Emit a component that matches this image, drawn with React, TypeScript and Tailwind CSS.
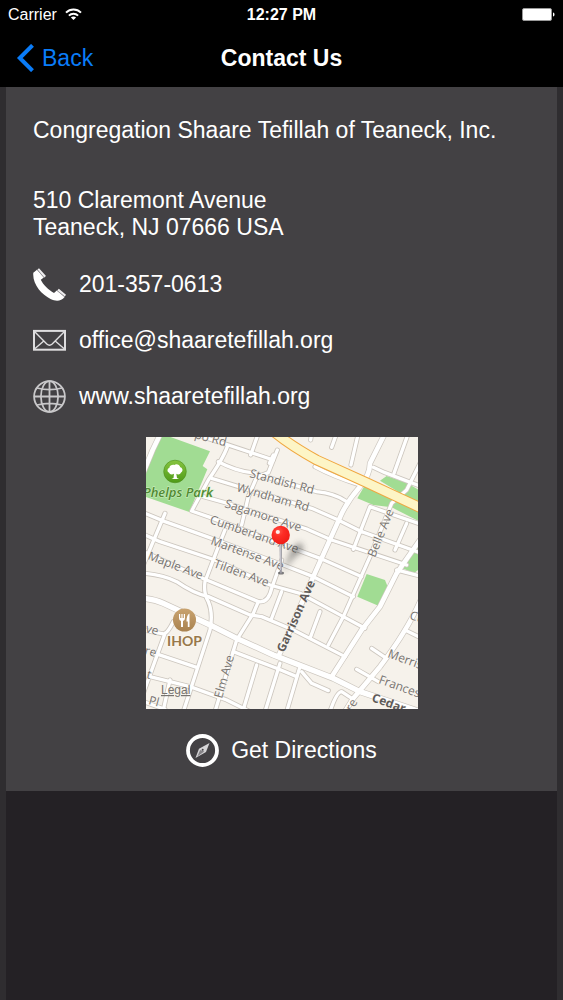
import type { ReactNode } from 'react';

interface StreetLabel {
  text: string;
  x: number;
  y: number;
  angle: number;
  bold?: boolean;
}

// Street lines are stored on a grid three times finer than the map itself
const SIDE_STREETS = [
  // north west
  'M140 5 L265 45 L400 90',
  'M355 10 L332 75',
  'M412 60 L385 128 L350 142 L325 200 L305 285',
  'M262 50 Q250 85 205 150 L155 243 L210 262 L540 385 L665 440',
  'M235 95 Q285 122 335 128 L530 185 Q585 190 620 215',
  'M215 145 L290 168 L515 235 L590 268 L665 305',
  'M190 200 L255 218 L500 297 L575 330 L800 405',
  'M15 250 L75 275 L215 325 L430 405 L520 440 L640 500',
  'M15 315 L60 335 L225 390 L390 465 L480 490 L610 560 L675 595',
  'M75 250 L10 405',
  'M255 300 L235 350 L195 455 Q190 490 205 515 Q220 550 210 600 L130 845',
  // south west
  'M10 365 L200 450 L355 515',
  'M15 430 Q70 435 110 455 Q160 490 205 500 L330 555 L365 560 L460 600 L615 680',
  'M100 575 Q85 605 75 610 L10 790',
  'M10 600 L70 612',
  'M45 670 L170 712',
  'M30 740 L150 770 L260 810 L330 845',
  'M90 750 L70 840',
  'M10 815 L75 838',
  'M425 390 L395 475 Q385 520 355 515 L340 550 L290 630 L225 845',
  'M280 665 L410 715 L470 740',
  'M350 705 L308 845',
  'M420 700 L375 845',
  'M425 485 L393 570',
  // south east
  'M540 545 L510 625',
  'M480 710 L440 845',
  'M485 725 L515 760 L565 782',
  'M570 845 Q590 785 605 785 L640 808',
  'M695 655 L735 682',
  'M650 718 L715 755',
  'M795 600 L840 622',
  // north east
  'M655 10 L633 105',
  'M590 10 L575 52',
  'M515 10 L512 30',
  'M400 75 L388 100',
  'M805 10 L762 130',
  'M700 112 L735 128 L840 168',
  'M840 100 L800 180 L755 220 L690 380 L610 560 L565 645',
  'M525 110 Q580 140 660 165',
  'M640 358 L690 230 L840 282',
  'M800 280 L765 360',
  'M665 305 L840 368',
  'M770 420 L840 438',
];

const MAIN_STREETS = [
  'M62 10 L38 60 L10 128',
  'M735 10 L690 100 Q690 135 660 170 Q620 215 600 262 L520 440 L415 680',
  'M840 330 L770 430 L720 530 L665 600 L575 740',
  'M840 515 Q800 605 720 710 L640 805 L615 845',
];

const AVENUE = 'M10 505 Q45 508 70 520 L210 585 L290 625 L400 675 L580 745 L660 785 L840 845';
const HIGHWAY = 'M390 -5 Q440 40 530 90 L680 158 L845 235';

const LABELS: StreetLabel[] = [
  { text: 'po Rd', x: 48, y: 1, angle: 15 },
  { text: 'Standish Rd', x: 103, y: 40, angle: 15 },
  { text: 'Wyndham Rd', x: 90, y: 54, angle: 16 },
  { text: 'Sagamore Ave', x: 78, y: 70, angle: 18 },
  { text: 'Cumberland Ave', x: 63, y: 86, angle: 19 },
  { text: 'Martense Ave', x: 64, y: 107, angle: 20 },
  { text: 'Tilden Ave', x: 67, y: 130, angle: 20 },
  { text: 'Maple Ave', x: 1, y: 122, angle: 21 },
  { text: 'Belle Ave', x: 229, y: 121, angle: -68 },
  { text: 'Elm Ave', x: 76, y: 262, angle: -74 },
  { text: 'Garrison Ave', x: 138, y: 216, angle: -66, bold: true },
  { text: 'Merrison', x: 241, y: 220, angle: 20 },
  { text: 'Frances', x: 232, y: 246, angle: 20 },
  { text: 'Cedar', x: 225, y: 264, angle: 20, bold: true },
  { text: 'Ct', x: 263, y: 182, angle: 15 },
  { text: 've', x: -1, y: 195, angle: 15 },
  { text: 're', x: -2, y: 217, angle: 15 },
  { text: 't', x: 0, y: 241, angle: 15 },
  { text: 'Pl', x: 2, y: 267, angle: 15 },
  { text: 're', x: 206, y: 275, angle: -60 },
];

function WifiIcon() {
  return (
    <svg viewBox="0 0 17 13" className="h-[13px] w-[17px]" fill="none" stroke="white" strokeWidth="2" aria-hidden="true">
      <path d="M1 4.6 C5.2 .4 11.8 .4 16 4.6" />
      <path d="M3.9 7.6 C6.5 5 10.5 5 13.1 7.6" />
      <path d="M8.5 12 L5.9 9.4 C7.4 8.1 9.6 8.1 11.1 9.4 Z" fill="white" stroke="none" />
    </svg>
  );
}

function BatteryIcon() {
  return (
    <svg viewBox="0 0 33 13" className="h-[13px] w-[33px]" aria-hidden="true">
      <rect x="0.5" y="0.5" width="29" height="12" rx="1.5" fill="white" stroke="#999" />
      <path d="M31 4.5 C33 5 33 8 31 8.5 Z" fill="white" />
    </svg>
  );
}

function PhoneIcon() {
  return (
    <svg viewBox="0 0 33 33" className="size-[33px] shrink-0" aria-hidden="true">
      <path
        d="M0.3 4.8 L4 1.8 L10.8 9.6 L7.8 11.8 C10 16.5 15.5 22.2 21 25 L23.8 22.6 L31.6 29 C28 33.4 23 33.6 17.5 31 C8.5 26.8 -0.8 16 0.3 4.8 Z"
        fill="white"
      />
      <path d="M4.4 1.6 L6 0.2 L13 8 L11.2 9.4 Z M24.2 22.4 L25.8 20.8 L33 26.8 L31.8 28.6 Z" fill="#eeedef" />
      <path d="M4.2 1.7 L11 9.5 M24 22.5 L31.7 28.8" stroke="#a3a1a5" strokeWidth="0.7" />
    </svg>
  );
}

function MailIcon() {
  return (
    <svg viewBox="0 0 33 33" className="size-[33px] shrink-0" fill="none" stroke="#dedddf" aria-hidden="true">
      <rect x="1" y="6.9" width="31" height="18.8" strokeWidth="2" />
      <path d="M1.5 7.5 L13.8 20 Q16.5 22.4 19.2 20 L31.5 7.5 M1.5 25 L10.8 17 M31.5 25 L22.2 17" strokeWidth="1.4" />
    </svg>
  );
}

function GlobeIcon() {
  return (
    <svg viewBox="0 0 33 33" className="size-[33px] shrink-0" fill="none" stroke="#c9c8ca" strokeWidth="1.8" aria-hidden="true">
      <circle cx="16.5" cy="16.5" r="15.4" />
      <ellipse cx="16.5" cy="16.5" rx="8.6" ry="15.4" />
      <path d="M16.5 1 V32 M1 16.5 H32 M4 8 Q16.5 11.2 29 8 M4 25 Q16.5 21.8 29 25" />
    </svg>
  );
}

function CompassIcon() {
  return (
    <svg viewBox="0 0 33 33" className="size-[33px] shrink-0" aria-hidden="true">
      <circle cx="16.5" cy="16.5" r="14.5" fill="none" stroke="white" strokeWidth="3.8" />
      <path d="M23.5 9 L20 18 L9.5 24 L13 14.8 Z" fill="#d5d4d6" />
      <path d="M18.3 17.6 L11.3 22.4 L14.2 16 Z" fill="#858387" />
      <circle cx="16.7" cy="15.8" r="1" fill="#434144" />
    </svg>
  );
}

function LocationMap() {
  return (
    <svg viewBox="0 0 272 272" className="h-[272px] w-[272px] overflow-hidden" role="img" aria-label="Map of Teaneck">
      <defs>
        <filter id="soft" x="-50%" y="-50%" width="200%" height="200%">
          <feGaussianBlur stdDeviation="3" />
        </filter>
        <radialGradient id="pin" cx="38%" cy="30%" r="70%">
          <stop offset="0" stopColor="#ff5548" />
          <stop offset="0.4" stopColor="#fd2d26" />
          <stop offset="1" stopColor="#f01d17" />
        </radialGradient>
        <linearGradient id="tree" x1="0" y1="0" x2="0" y2="1">
          <stop offset="0" stopColor="#86c440" />
          <stop offset="1" stopColor="#4e9a17" />
        </linearGradient>
        <linearGradient id="food" x1="0" y1="0" x2="0" y2="1">
          <stop offset="0" stopColor="#c9a36f" />
          <stop offset="1" stopColor="#a98250" />
        </linearGradient>
      </defs>
      <rect width="272" height="272" fill="#f6f2eb" />

      <g transform="translate(-6 -7) scale(0.3333)">
        {/* Parks */}
        <g fill="#a1dc93">
          <path d="M58 15 H75 L210 64 L188 108 L202 118 L148 246 L15 200 V120 Z" />
          <path d="M680 432 L735 450 L745 475 L715 527 L652 500 Z" />
          <path d="M720 152 L740 138 L800 158 L840 182 V225 Z" />
          <path d="M672 170 L652 205 L700 225 L755 232 L840 275 V230 Z" />
          <path d="M840 342 L788 415 L822 430 L840 415 Z" />
        </g>

        {/* Streets: casings first so that the crossings stay open */}
        <g fill="none" stroke="#ccc6be" strokeLinecap="round" strokeLinejoin="round">
          {SIDE_STREETS.map((d) => <path key={d} d={d} strokeWidth="15" />)}
          {MAIN_STREETS.map((d) => <path key={d} d={d} strokeWidth="18" />)}
          <path d={AVENUE} strokeWidth="20" />
        </g>
        <g fill="none" stroke="white" strokeLinecap="round" strokeLinejoin="round">
          {SIDE_STREETS.map((d) => <path key={d} d={d} strokeWidth="10" />)}
          {MAIN_STREETS.map((d) => <path key={d} d={d} strokeWidth="14" />)}
          <path d={AVENUE} strokeWidth="16" />
        </g>
        <path d={HIGHWAY} fill="none" stroke="#f0a73f" strokeWidth="32" />
        <path d={HIGHWAY} fill="none" stroke="#fdf5c6" strokeWidth="26" />
      </g>

      {/* Street names */}
      <g fontFamily="'Open Sans', sans-serif" fontSize="12" stroke="#f9f6f1" strokeWidth="1" paintOrder="stroke">
        {LABELS.map((label) => (
          <text
            key={`${label.text}-${label.x}`}
            transform={`translate(${label.x} ${label.y}) rotate(${label.angle})`}
            fontWeight={label.bold ? 700 : 400}
            fill={label.bold ? '#5f5b59' : '#77736f'}
          >
            {label.text}
          </text>
        ))}
      </g>

      {/* Places */}
      <circle cx="29" cy="34.5" r="11.3" fill="url(#tree)" stroke="#4b8d1b" strokeWidth="0.6" />
      <path
        d="M27.5 41 L28 36.8 C26 38 23.5 37.5 23 35.5 C21 35 21 31.5 23.3 31 C23.5 28.5 26.5 27.3 28.3 28 C30.5 26.5 33.8 27.8 34.2 30.2 C37 30.7 37.3 34.5 35 35.5 C34.3 37.5 32 38 30.3 36.8 L31 41 L33 42 H25.5 Z"
        fill="white"
      />
      <text x="67" y="60" textAnchor="end" fontFamily="'Open Sans', sans-serif" fontSize="13" fontStyle="italic" fontWeight="600" fill="#508a31" stroke="#d3efc8" strokeWidth="1" paintOrder="stroke">
        Phelps Park
      </text>
      <circle cx="38.5" cy="183" r="11.5" fill="url(#food)" />
      <path
        d="M33 177 V181 Q33 183.5 35 184 V190 H37 V184 Q39 183.5 39 181 V177 H37.8 V181 H36.6 V177 H35.4 V181 H34.2 V177 Z M43.5 176.5 Q40.5 178 40.5 184.5 H41.8 V190 H43.5 Z"
        fill="white"
      />
      <text x="38.5" y="209" textAnchor="middle" fontFamily="Lato, sans-serif" fontSize="14" fontWeight="700" fill="#97784b" stroke="#faf6ef" strokeWidth="2" paintOrder="stroke">
        IHOP
      </text>
      <a href="#legal">
        <text x="15" y="257" fontFamily="'Liberation Sans', sans-serif" fontSize="12" fill="#77736f" textDecoration="underline">
          Legal
        </text>
      </a>

      {/* Pin */}
      <path d="M136 136 L146 112 L154 105 L158 113 L148 120 Z" fill="#333" opacity="0.5" filter="url(#soft)" />
      <ellipse cx="135" cy="136" rx="3" ry="1.5" fill="#4a4a4f" opacity="0.7" />
      <path d="M133.5 105 H136 L135.8 136 Q135 137.5 134 136 Z" fill="#9a99a2" />
      <path d="M134.6 107 V133" stroke="#dddce2" strokeWidth="0.7" />
      <circle cx="134.7" cy="98" r="9.2" fill="url(#pin)" />
      <circle cx="131.8" cy="95" r="2.1" fill="white" opacity="0.9" />
    </svg>
  );
}

function ContactRow({ href, icon, children }: { href: string; icon: ReactNode; children: ReactNode }) {
  return (
    <a href={href} className="flex h-14 items-center gap-[13px]">
      {icon}
      <span>{children}</span>
    </a>
  );
}

export default function App() {
  return (
    <div className="flex min-h-screen flex-col bg-[#2f2d30] font-['Liberation_Sans',Arial,sans-serif] text-[23px] leading-[27px] text-white">
      <header className="bg-black">
        <div className="grid h-[29px] grid-cols-3 items-center px-2 text-base">
          <div className="flex items-center gap-2">
            <span>Carrier</span>
            <WifiIcon />
          </div>
          <span className="text-center font-bold">12:27 PM</span>
          <div className="flex justify-end">
            <BatteryIcon />
          </div>
        </div>
        <div className="grid h-[58px] grid-cols-[1fr_auto_1fr] items-center px-4">
          <button type="button" className="flex items-center gap-2 justify-self-start text-[#0a7cf8]">
            <svg viewBox="0 0 18 28" className="h-7 w-[18px]" fill="none" stroke="currentColor" strokeWidth="4" aria-hidden="true">
              <path d="M16.5 1.3 L3.8 14 L16.5 26.7" />
            </svg>
            Back
          </button>
          <h1 className="font-bold">Contact Us</h1>
        </div>
      </header>

      <main className="flex flex-1 flex-col px-1.5">
        <section className="bg-[#434144] px-[27px] pt-[30px]">
          <h2>Congregation Shaare Tefillah of Teaneck, Inc.</h2>
          <address className="mt-[43px] not-italic">
            510 Claremont Avenue
            <br />
            Teaneck, NJ 07666 USA
          </address>
          <div className="mt-[15px]">
            <ContactRow href="tel:201-357-0613" icon={<PhoneIcon />}>201-357-0613</ContactRow>
            <ContactRow href="mailto:office@shaaretefillah.org" icon={<MailIcon />}>office@shaaretefillah.org</ContactRow>
            <ContactRow href="http://www.shaaretefillah.org" icon={<GlobeIcon />}>www.shaaretefillah.org</ContactRow>
          </div>
          <div className="mt-[13px] flex justify-center">
            <LocationMap />
          </div>
          <div className="flex h-[82px] items-center justify-center">
            <a href="#directions" className="flex items-center gap-3">
              <CompassIcon />
              Get Directions
            </a>
          </div>
        </section>
        <div className="flex-1 bg-[#242125]" />
      </main>
    </div>
  );
}
